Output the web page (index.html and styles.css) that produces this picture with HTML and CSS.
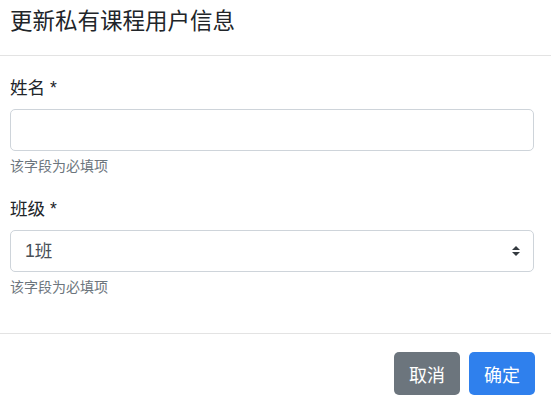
FILE: index.html
```html
<!DOCTYPE html>
<html lang="zh-CN">
<head>
  <meta charset="UTF-8" />
  <meta name="viewport" content="width=device-width, initial-scale=1.0" />
  <title>更新私有课程用户信息</title>
  <link rel="stylesheet" href="styles.css">
</head>
<body>
  <div class="modal">
    <header class="modal-header">
      <h5 class="modal-title">更新私有课程用户信息</h5>
    </header>
    <form class="modal-body">
      <div class="form-group">
        <label for="name">姓名 *</label>
        <input type="text" id="name" class="form-control" />
        <small class="help">该字段为必填项</small>
      </div>
      <div class="form-group">
        <label for="klass">班级 *</label>
        <div class="select-wrap">
          <select id="klass" class="form-control">
            <option>1班</option>
            <option>2班</option>
          </select>
          <svg class="caret" width="8" height="12" viewBox="0 0 8 12">
            <path d="M4 1 L8 5 H0 Z M4 11 L8 7 H0 Z" fill="#343a40" />
          </svg>
        </div>
        <small class="help">该字段为必填项</small>
      </div>
    </form>
    <footer class="modal-footer">
      <button type="button" class="btn btn-secondary">取消</button>
      <button type="button" class="btn btn-primary">确定</button>
    </footer>
  </div>
</body>
</html>
```

FILE: styles.css
```css
body {
  font-family: "Liberation Sans", "Noto Sans CJK SC", sans-serif;
  margin: 0;
  padding: 0;
  background: #fff;
  color: #212529;
}
.modal {
  width: 551px;
}
.modal-header {
  height: 56px;
  border-bottom: 1px solid #e3e3e3;
  padding: 0 10px;
  box-sizing: border-box;
}
.modal-title {
  margin: 0;
  padding-top: 5px;
  font-size: 22.5px;
  font-weight: normal;
  line-height: 33px;
}
.modal-body {
  padding: 19px 17px 16px 10px;
}
.form-group {
  margin-bottom: 19px;
}
.form-group label {
  display: block;
  font-size: 17.6px;
  line-height: 26px;
  margin-bottom: 8px;
}
.form-control {
  display: block;
  width: 100%;
  height: 42px;
  box-sizing: border-box;
  padding: 0 14px;
  font-family: inherit;
  font-size: 17.6px;
  color: #495057;
  background: #fff;
  border: 1px solid #ced4da;
  border-radius: 5px;
  appearance: none;
}
.select-wrap {
  position: relative;
}
.caret {
  position: absolute;
  right: 14px;
  top: 15px;
}
.help {
  display: block;
  margin-top: 5px;
  font-size: 14px;
  line-height: 21px;
  color: #6c757d;
}
.modal-footer {
  border-top: 1px solid #e3e3e3;
  padding: 18px 16px 10px 10px;
  display: flex;
  justify-content: flex-end;
  gap: 9px;
}
.btn {
  height: 43px;
  padding: 0 15px;
  font-family: inherit;
  font-size: 18px;
  color: #fff;
  border: none;
  border-radius: 5px;
}
.btn-secondary {
  background: #6c757d;
}
.btn-primary {
  background: #2f80ed;
}
```
